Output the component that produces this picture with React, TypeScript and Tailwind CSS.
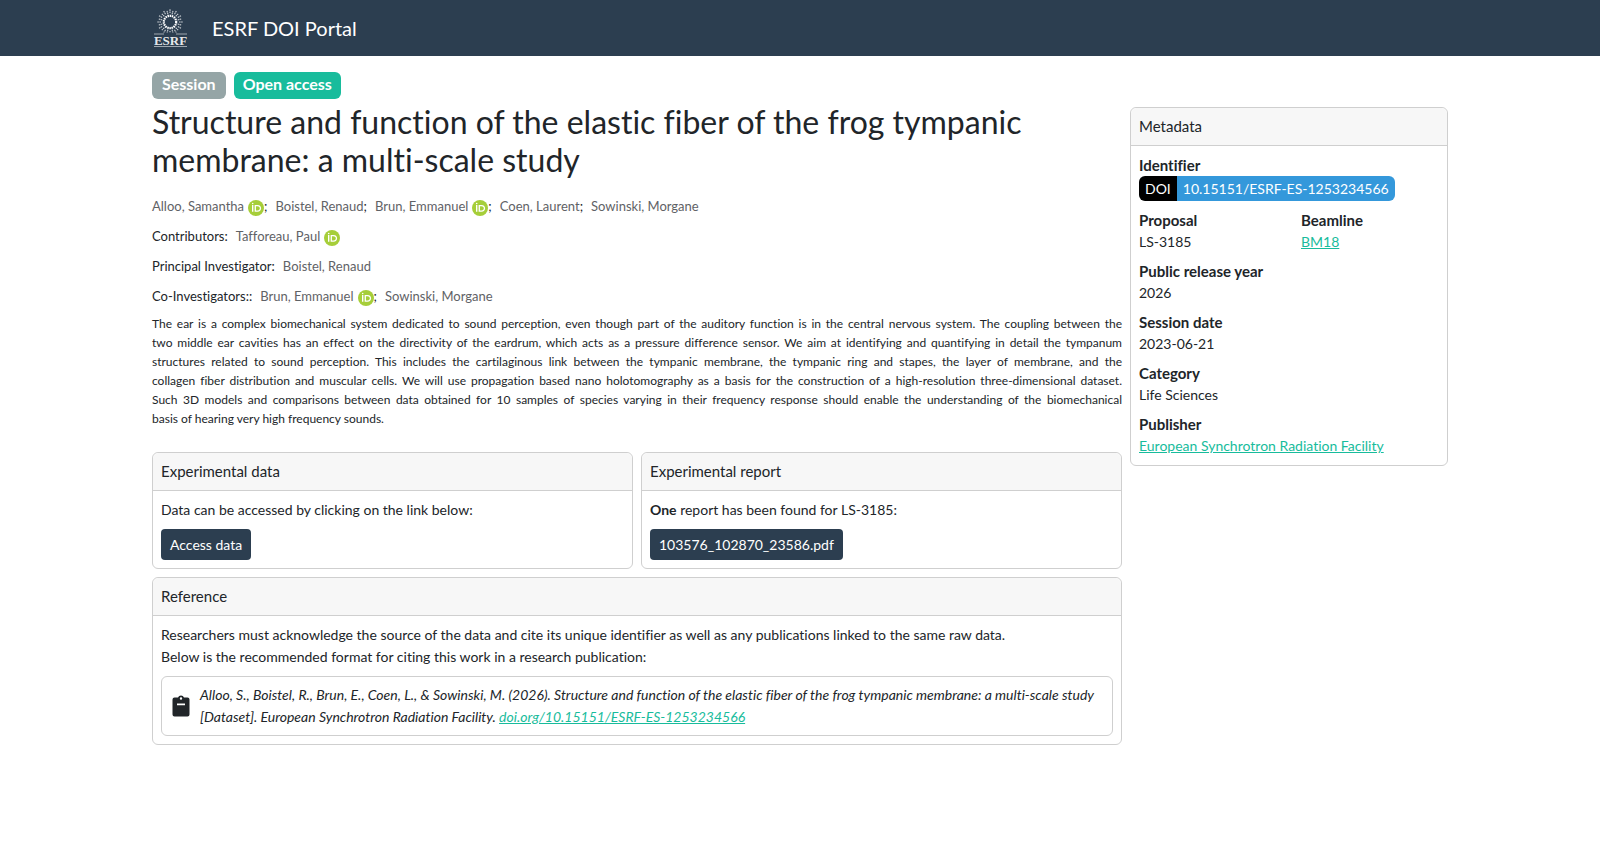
import type { ReactNode } from "react";

type Person = { name: string; orcid?: boolean };

const AUTHORS: Person[] = [
  { name: "Alloo, Samantha", orcid: true },
  { name: "Boistel, Renaud" },
  { name: "Brun, Emmanuel", orcid: true },
  { name: "Coen, Laurent" },
  { name: "Sowinski, Morgane" },
];

const PEOPLE: { label?: string; people: Person[] }[] = [
  { people: AUTHORS },
  { label: "Contributors:", people: [{ name: "Tafforeau, Paul", orcid: true }] },
  { label: "Principal Investigator:", people: [{ name: "Boistel, Renaud" }] },
  { label: "Co-Investigators::", people: [{ name: "Brun, Emmanuel", orcid: true }, { name: "Sowinski, Morgane" }] },
];

// one entry per line on wide screens, flows freely below that
const ABSTRACT = [
  "The ear is a complex biomechanical system dedicated to sound perception, even though part of the auditory function is in the central nervous system. The coupling between the",
  "two middle ear cavities has an effect on the directivity of the eardrum, which acts as a pressure difference sensor. We aim at identifying and quantifying in detail the tympanum",
  "structures related to sound perception. This includes the cartilaginous link between the tympanic membrane, the tympanic ring and stapes, the layer of membrane, and the",
  "collagen fiber distribution and muscular cells. We will use propagation based nano holotomography as a basis for the construction of a high-resolution three-dimensional dataset.",
  "Such 3D models and comparisons between data obtained for 10 samples of species varying in their frequency response should enable the understanding of the biomechanical",
  "basis of hearing very high frequency sounds.",
];

const LINK = "text-[#18bc9c] underline";
const BUTTON = "h-[31px] rounded-sm bg-[#2c3e50] px-[9px] text-sm text-white";

// 24 rays around a dotted ring, with the name below
function Logo() {
  const rays = Array.from({ length: 24 }, (_, i) => i * 15);
  return (
    <svg width="35" height="40" viewBox="0 0 35 40" aria-hidden="true">
      <g stroke="#fff" fill="none">
        <circle cx="17" cy="14" r="6.2" strokeWidth="2.2" strokeDasharray="1.5 0.66" />
        {rays.map((a, i) => (
          <path
            key={a}
            d={i % 2 ? "M17 6V2.4" : "M17 5V1"}
            strokeWidth="1.1"
            strokeDasharray="1.6 0.5"
            opacity="0.75"
            transform={`rotate(${a} 17 14)`}
          />
        ))}
      </g>
      <path d="M0 24.500H35V40H0Z" fill="#2c3e50" />
      <path d="M1 26H11M23 26H34M1 38.500H34" stroke="#fff" strokeWidth="1" opacity="0.55" />
      <text x="17.500" y="37" textAnchor="middle" fontSize="13" fontWeight="700" fill="#fff" fillOpacity="0.9" fontFamily="Liberation Serif, serif">ESRF</text>
    </svg>
  );
}

function Orcid() {
  return (
    <svg className="ml-1 inline-block size-4 align-[-5px]" viewBox="0 0 256 256" role="img" aria-label="ORCID">
      <circle cx="128" cy="128" r="128" fill="#a6ce39" />
      <path fill="#fff" d="M64 80h22v108H64z" />
      <circle cx="75" cy="56" r="13" fill="#fff" />
      <path
        fill="#fff"
        fillRule="evenodd"
        d="M106 78h46c40 0 58 28 58 55 0 29-22 55-58 55h-46zM127 98v70h25c28 0 37-20 37-35 0-18-11-35-38-35z"
      />
    </svg>
  );
}

function Clipboard() {
  return (
    <svg width="22" height="22" viewBox="0 0 22 22" aria-hidden="true">
      <path
        fill="currentColor"
        fillRule="evenodd"
        d="M4.500 2.500H8A3.200 3.200 0 0 1 14 2.500h3.500q2 0 2 2v15q0 2-2 2h-13q-2 0-2-2v-15q0-2 2-2zM11 2.300a1.200 1.200 0 1 0 0 2.400a1.200 1.200 0 1 0 0-2.400zM7 8.500v1.700h8V8.500z"
      />
    </svg>
  );
}

function Card({ title, className = "", children }: { title: string; className?: string; children: ReactNode }) {
  return (
    <section className={`rounded-md border border-[#cfcfcf] ${className}`}>
      <h2 className="rounded-t-md border-b border-[#cfcfcf] bg-[#f7f7f7] px-2 pt-[7px] pb-2 text-[15px]">{title}</h2>
      <div className="p-2">{children}</div>
    </section>
  );
}

function Field({ label, children }: { label: string; children: ReactNode }) {
  return (
    <div>
      <dt className="text-[15px] font-bold">{label}</dt>
      <dd>{children}</dd>
    </div>
  );
}

export default function App() {
  return (
    <div className="min-h-screen bg-white font-['Lato',sans-serif] text-sm leading-[22px] text-[#212529] [font-variant-ligatures:none]">
      <header className="bg-[#2c3e50]">
        <a href="#" className="mx-auto flex h-14 max-w-[1320px] items-center gap-6 px-[13px] text-xl text-white">
          <Logo />
          ESRF DOI Portal
        </a>
      </header>

      <main className="mx-auto max-w-[1320px] px-3 pt-4">
        <div className="flex gap-2 text-base leading-4 font-bold text-white">
          <span className="rounded-md bg-[#95a5a6] px-[10px] pt-1 pb-[7px]">Session</span>
          <span className="rounded-md bg-[#18bc9c] px-[9px] pt-1 pb-[7px]">Open access</span>
        </div>

        <div className="mt-1 grid items-start gap-2 lg:grid-cols-[970fr_318fr]">
          <div className="min-w-0">
            <h1 className="text-[32px] leading-[38px]">
              Structure and function of the elastic fiber of the frog tympanic membrane: a multi-scale study
            </h1>

            <div className="mt-3 text-[13px] leading-[30px]">
              {PEOPLE.map((row, i) => (
                <p key={i} className="flex h-[30px] flex-wrap gap-x-2">
                  {row.label && <span>{row.label}</span>}
                  {row.people.map((p, j) => (
                    <span key={p.name}>
                      <span className="text-[#5f6266]">{p.name}</span>
                      {p.orcid && <Orcid />}
                      {j < row.people.length - 1 && ";"}
                    </span>
                  ))}
                </p>
              ))}
            </div>

            <p className="mt-[3px] text-justify text-xs leading-[19px] xl:text-[12px]">
              {ABSTRACT.map((line) => (
                <span key={line} className="xl:block xl:not-last:[text-align-last:justify]">{line} </span>
              ))}
            </p>

            <div className="mt-6 grid grid-cols-2 gap-2">
              <Card title="Experimental data">
                <p className="mb-2">Data can be accessed by clicking on the link below:</p>
                <button className={BUTTON}>Access data</button>
              </Card>
              <Card title="Experimental report">
                <p className="mb-2"><b>One</b> report has been found for LS-3185:</p>
                <button className={BUTTON}>103576_102870_23586.pdf</button>
              </Card>
              <Card title="Reference" className="col-span-2">
                <p>Researchers must acknowledge the source of the data and cite its unique identifier as well as any publications linked to the same raw data.</p>
                <p>Below is the recommended format for citing this work in a research publication:</p>
                <div className="mt-2 flex items-center gap-2 rounded-md border border-[#cfcfcf] px-2 py-[7px]">
                  <button aria-label="Copy citation"><Clipboard /></button>
                  <p className="italic">
                    Alloo, S., Boistel, R., Brun, E., Coen, L., &amp; Sowinski, M. (2026). Structure and function of the
                    elastic fiber of the frog tympanic membrane: a multi-scale study<br />
                    [Dataset]. European Synchrotron Radiation Facility.{" "}
                    <a href="#" className={LINK}>doi.org/10.15151/ESRF-ES-1253234566</a>
                  </p>
                </div>
              </Card>
            </div>
          </div>

          <Card title="Metadata" className="mt-1">
            <dl className="flex flex-col gap-[7px]">
              <Field label="Identifier">
                <a href="#" className="mb-px flex w-fit overflow-hidden rounded-md leading-[25px] text-white">
                  <span className="bg-black px-[6px]">DOI</span>
                  <span className="bg-[#3498db] px-[6px]">10.15151/ESRF-ES-1253234566</span>
                </a>
              </Field>
              <div className="grid grid-cols-2 gap-6">
                <Field label="Proposal">LS-3185</Field>
                <Field label="Beamline"><a href="#" className={LINK}>BM18</a></Field>
              </div>
              <Field label="Public release year">2026</Field>
              <Field label="Session date">2023-06-21</Field>
              <Field label="Category">Life Sciences</Field>
              <Field label="Publisher"><a href="#" className={LINK}>European Synchrotron Radiation Facility</a></Field>
            </dl>
          </Card>
        </div>
      </main>
    </div>
  );
}
